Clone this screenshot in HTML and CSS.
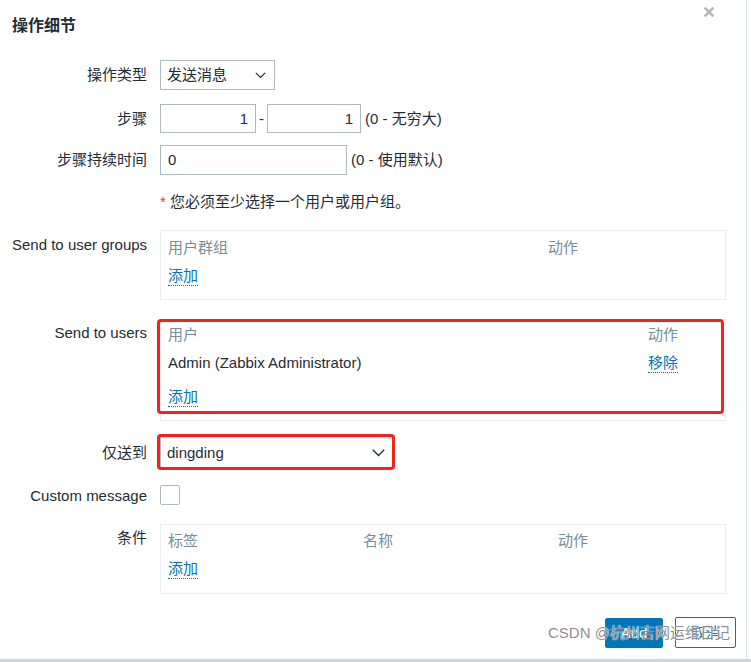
FILE: index.html
```html
<!DOCTYPE html>
<html lang="zh">
<head>
<meta charset="utf-8">
<title>操作细节</title>
<link rel="stylesheet" href="styles.css">
</head>
<body>
<div class="page">
  <div class="dialog">
    <div class="dlg-head">
      <h1 class="dlg-title">操作细节</h1>
      <button class="dlg-close" type="button" aria-label="close">
        <svg width="10" height="10" viewBox="0 0 10 10"><path d="M1.5 1.5 L8.5 8.5 M8.5 1.5 L1.5 8.5" stroke="#b0b9be" stroke-width="2.6" stroke-linecap="square"/></svg>
      </button>
    </div>

    <div class="form">
      <div class="row row-type">
        <div class="lbl">操作类型</div>
        <div class="ctl">
          <div class="select select-type"><span>发送消息</span>
            <svg class="chev" width="11" height="7" viewBox="0 0 11 7"><path d="M0.8 0.8 L5.5 5.5 L10.2 0.8" fill="none" stroke="#1f2c33" stroke-width="1.2"/></svg>
          </div>
        </div>
      </div>

      <div class="row row-steps">
        <div class="lbl">步骤</div>
        <div class="ctl">
          <div class="input num num-a">1</div>
          <span class="dash">-</span>
          <div class="input num num-b">1</div>
          <span class="hint">(0 - 无穷大)</span>
        </div>
      </div>

      <div class="row row-dur">
        <div class="lbl">步骤持续时间</div>
        <div class="ctl">
          <div class="input dur">0</div>
          <span class="hint">(0 - 使用默认)</span>
        </div>
      </div>

      <div class="row row-note">
        <div class="lbl"></div>
        <div class="ctl note"><span><span class="req">*</span> 您必须至少选择一个用户或用户组。</span></div>
      </div>

      <div class="row row-groups">
        <div class="lbl lbl-top">Send to user groups</div>
        <div class="ctl">
          <div class="tbl tbl-groups">
            <div class="tr th"><span>用户群组</span><span>动作</span></div>
            <div class="tr"><a class="link">添加</a></div>
          </div>
        </div>
      </div>

      <div class="row row-users">
        <div class="lbl lbl-top">Send to users</div>
        <div class="ctl mark-wrap">
          <div class="tbl tbl-users">
            <div class="tr th"><span>用户</span><span>动作</span></div>
            <div class="tr"><span>Admin (Zabbix Administrator)</span><span><a class="link">移除</a></span></div>
            <div class="tr tr-add"><a class="link">添加</a></div>
          </div>
          <div class="mark mark-users"></div>
        </div>
      </div>

      <div class="row row-only">
        <div class="lbl">仅送到</div>
        <div class="ctl mark-wrap">
          <div class="select select-only"><span>dingding</span>
            <svg class="chev" width="13" height="8" viewBox="0 0 13 8"><path d="M0.8 0.8 L6.5 6.5 L12.2 0.8" fill="none" stroke="#1f2c33" stroke-width="1.3"/></svg>
          </div>
          <div class="mark mark-only"></div>
        </div>
      </div>

      <div class="row row-custom">
        <div class="lbl">Custom message</div>
        <div class="ctl"><div class="checkbox"></div></div>
      </div>

      <div class="row row-cond">
        <div class="lbl lbl-top">条件</div>
        <div class="ctl">
          <div class="tbl tbl-cond">
            <div class="tr th"><span>标签</span><span>名称</span><span>动作</span></div>
            <div class="tr"><a class="link">添加</a></div>
          </div>
        </div>
      </div>
    </div>

    <div class="footer">
      <button class="btn btn-add" type="button">Add</button>
      <button class="btn btn-cancel" type="button">取消</button>
    </div>

    <div class="watermark">CSDN @杭州吉网运维日记</div>
  </div>
  <div class="bottom-band"></div>
</div>
</body>
</html>
```

FILE: styles.css
```css
* { box-sizing: border-box; }

html, body {
  margin: 0;
  padding: 0;
  background: #ffffff;
}

body {
  font-family: "Liberation Sans", Arial, "Noto Sans CJK SC", sans-serif;
  font-size: 15px;
  line-height: 20px;
  color: #1f2c33;
}

.page {
  width: 751px;
  height: 662px;
  overflow: hidden;
}

.dialog {
  position: relative;
  width: 747px;
  height: 659px;
  border-right: 1px solid #dce2e5;
  background: #fff;
}

.bottom-band {
  height: 3px;
  background: #cdd5d8;
}

.dlg-head {
  display: flex;
  justify-content: space-between;
  align-items: flex-start;
}

.dlg-title {
  margin: 16px 0 0 12px;
  font-size: 16px;
  line-height: 20px;
  font-weight: bold;
  color: #1f2c33;
}

.dlg-close {
  margin: 7px 32px 0 0;
  padding: 0;
  border: 0;
  background: transparent;
  width: 10px;
  height: 10px;
  display: flex;
}

.form {
  display: flex;
  flex-direction: column;
}

.row {
  display: flex;
  align-items: center;
  gap: 13px;
}

.lbl {
  width: 147px;
  padding-left: 12px;
  text-align: right;
  white-space: nowrap;
  flex: none;
}

.lbl-top { align-self: flex-start; padding-top: 5px; }

.ctl {
  display: flex;
  align-items: center;
}

.row-type   { margin-top: 24px; height: 30px; }
.row-steps  { margin-top: 14px; height: 29px; }
.row-dur    { margin-top: 12px; height: 30px; }
.row-note   { margin-top: 17px; height: 20px; }
.row-groups { margin-top: 18px; align-items: flex-start; }
.row-users  { margin-top: 19px; align-items: flex-start; }
.row-users .lbl-top { padding-top: 4px; }
.row-only   { margin-top: 15px; height: 32px; }
.row-only .lbl { padding-top: 2px; }
.row-custom { margin-top: 17px; height: 20px; }
.row-custom .lbl { padding-top: 1px; }
.row-cond   { margin-top: 19px; align-items: flex-start; }
.row-cond .lbl-top { padding-top: 4px; }

/* selects & inputs */
.select, .input {
  border: 1px solid #acbbc2;
  background: #fff;
  height: 100%;
  display: flex;
  align-items: center;
}

.select {
  justify-content: space-between;
  padding: 0 8px 0 6px;
}

.select-type { width: 115px; height: 30px; }
.select-type .chev { margin-top: 1px; }

.select-only {
  width: 233px;
  height: 32px;
  border-top-color: #2b5a85;
  padding: 2px 7px 0 6px;
}

.input { height: 29px; padding: 0 7px; }
.num { justify-content: flex-end; }
.num-a { width: 96px; }
.num-b { width: 94px; }
.dash { width: 11px; text-align: center; }
.hint { margin-left: 4px; }
.dur { width: 187px; height: 30px; }

.note { white-space: pre; }
.req { color: #e33734; }

/* tables */
.tbl {
  width: 566px;
  border: 1px solid #ebeef0;
  display: flex;
  flex-direction: column;
  gap: 8px;
  padding: 7px 7px 0 7px;
}

.tr { display: grid; line-height: 20px; }
.th { color: #768d99; }

.tbl-groups { height: 70px; }
.tbl-groups .tr { grid-template-columns: 380px 1fr; }

.tbl-users { height: 102px; padding-top: 5px; }
.tbl-users .tr { grid-template-columns: 480px 1fr; }
.tbl-users .tr-add { margin-top: 6px; }

.tbl-cond { height: 70px; padding-top: 6px; }
.tbl-cond .tr { grid-template-columns: 195px 195px 1fr; }

.link {
  color: #0275b8;
  text-decoration: none;
  border-bottom: 1px dotted #0275b8;
  justify-self: start;
  line-height: 19px;
  display: inline-block;
}

.checkbox {
  width: 20px;
  height: 20px;
  border: 1px solid #acbbc2;
  border-radius: 2px;
}

/* red annotations drawn over the screenshot */
.mark-wrap { position: relative; }

.mark {
  position: absolute;
  border: 3px solid #f4211c;
  border-radius: 4px;
  pointer-events: none;
}

.mark-users { left: -3px; top: 0; width: 567px; height: 95px; }
.mark-only  { left: -3px; top: -2px; width: 238px; height: 36px; }

/* footer */
.footer {
  display: flex;
  justify-content: flex-end;
  align-items: flex-start;
  gap: 12px;
  padding-right: 10px;
  margin-top: 23px;
}

.btn {
  font-family: "Liberation Sans", Arial, "Noto Sans CJK SC", sans-serif;
  font-size: 15px;
  line-height: 20px;
  border-radius: 2px;
  padding: 0;
  height: 31px;
}

.btn-add {
  width: 58px;
  margin-top: 1px;
  height: 30px;
  background: #0275b8;
  border: 1px solid #0275b8;
  color: #fff;
}

.btn-cancel {
  width: 61px;
  background: #fff;
  border: 1px solid #0275b8;
  color: #0275b8;
}

.watermark {
  position: absolute;
  left: 548px;
  top: 623px;
  font-size: 15px;
  line-height: 20px;
  color: rgba(120, 120, 120, 0.85);
  white-space: nowrap;
  text-shadow: 0 0 1px #fff, 0 0 1px #fff;
  pointer-events: none;
}
```
